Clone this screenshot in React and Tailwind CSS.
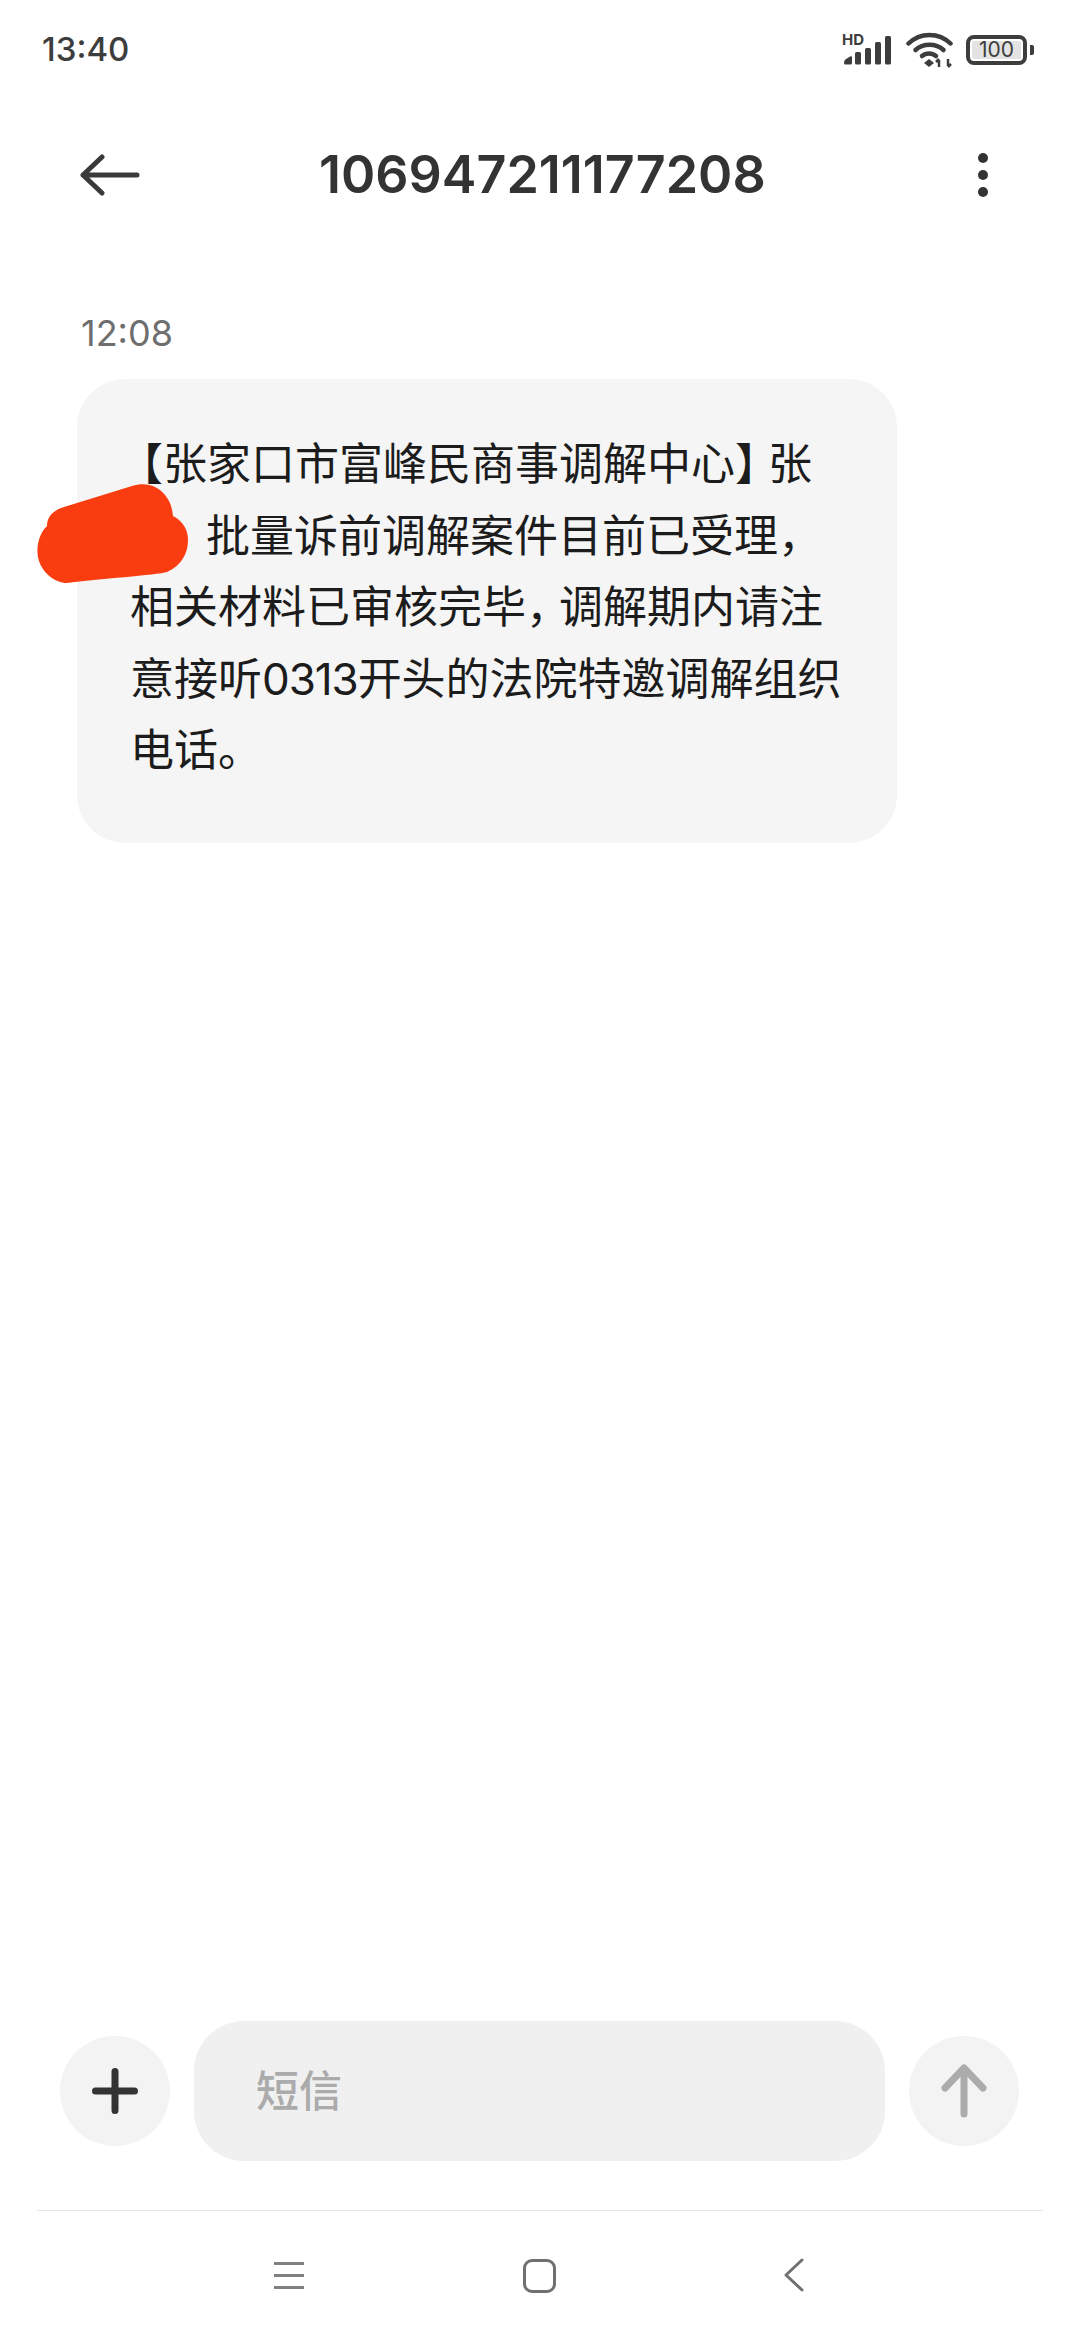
const FONT = "font-['Inter','Noto_Sans_CJK_SC',sans-serif]"
// full-width punctuation is narrower in the screenshot
const NARROW = "[font-feature-settings:'halt'] tracking-[11px]"

// status bar icons
function Signal() {
  return (
    <div className="relative w-[52px] h-[34px]">
      <span className="absolute left-0 top-[-2px] text-[15px] leading-[18px] font-bold text-[#3d3d3d]">HD</span>
      <svg width="52" height="34" viewBox="0 0 52 34">
        <path d="M2 30 q0-3 2-4 l4-2.5 q2-1 2 1 v5.5 q0 1.5-1.5 1.5 h-5 q-1.5 0-1.5-1.5z" fill="#3d3d3d" />
        <rect x="13" y="19" width="6" height="12.5" rx="1.5" fill="#3d3d3d" />
        <rect x="23" y="15" width="6" height="16.5" rx="1.5" fill="#3d3d3d" />
        <rect x="33" y="9" width="6" height="22.5" rx="1.5" fill="#3d3d3d" />
        <rect x="43" y="3" width="6" height="28.5" rx="1.5" fill="#3d3d3d" />
      </svg>
    </div>
  )
}

function Wifi() {
  return (
    <svg width="48" height="36" viewBox="0 0 48 36" fill="none" stroke="#3d3d3d" strokeWidth="4.5" strokeLinecap="round">
      <path d="M2.5 11.5 C14 0 33 0 44.5 11.5" />
      <path d="M9.5 18 C17 11 30 11 37.5 18" />
      <path d="M16 24 C20 20.5 26 20.5 30 24" />
      <path d="M23 27 L28 31 L23 35 L18 31 Z" fill="#3d3d3d" stroke="none" />
      <path d="M33 35 V28 M30 30 L33 27 M42 27 V34 M45 32 L42 35" strokeWidth="2.5" strokeLinecap="butt" />
    </svg>
  )
}

function Battery() {
  return (
    <div className="flex items-center gap-[3px]">
      <div className="w-[61px] h-[30px] rounded-[8px] border-[4px] border-[#3d3d3d] p-[2px] flex">
        <div className="flex-1 bg-[#e3e3e3] rounded-[2px] flex items-center justify-center text-[21px] leading-none text-[#3d3d3d]">100</div>
      </div>
      <div className="w-[4px] h-[10px] rounded-r-[2px] bg-[#3d3d3d]" />
    </div>
  )
}

function NavBar() {
  return (
    <div className="h-[129px] pl-[274px] flex items-center">
      <div className="w-[30px] flex flex-col gap-[9px]">
        <div className="h-[3px] bg-[#808080]" />
        <div className="h-[3px] bg-[#808080]" />
        <div className="h-[3px] bg-[#808080]" />
      </div>
      <div className="ml-[219px] w-[33px] h-[34px] rounded-[9px] border-[3px] border-[#707070]" />
      <svg className="ml-[226px]" width="24" height="36" viewBox="0 0 24 36" fill="none" stroke="#707070" strokeWidth="3" strokeLinecap="round" strokeLinejoin="round">
        <path d="M20 2 L4 17 L20 32" />
      </svg>
    </div>
  )
}

export default function App() {
  return (
    <div className={`w-[1080px] h-[2340px] bg-white flex flex-col relative overflow-hidden ${FONT}`}>
      {/* Status bar */}
      <div className="h-[96px] pl-[42px] pr-[46px] pt-[3px] flex items-center justify-between">
        <span className="text-[33px] font-medium text-[#3d3d3d]">13:40</span>
        <div className="flex items-center gap-[12px]">
          <Signal />
          <Wifi />
          <Battery />
        </div>
      </div>

      {/* Header */}
      <div className="h-[140px] pl-[80px] pt-[17px] flex items-center">
        <svg width="60" height="42" viewBox="0 0 60 42" fill="none" stroke="#3a3a3a" strokeWidth="5" strokeLinecap="round" strokeLinejoin="round">
          <path d="M57 21 H3 M22 3 L3 21 L22 39" />
        </svg>
        <h1 className="ml-[179px] text-[52px] font-semibold text-[#333333] leading-none">106947211177208</h1>
        <div className="ml-[212px] flex flex-col gap-[7px]">
          <div className="w-[10px] h-[10px] rounded-full bg-[#333333]" />
          <div className="w-[10px] h-[10px] rounded-full bg-[#333333]" />
          <div className="w-[10px] h-[10px] rounded-full bg-[#333333]" />
        </div>
      </div>

      {/* Message */}
      <div className="flex-1 pl-[77px] pt-[76px]">
        <div className="pl-[4px] text-[36px] leading-[42px] text-[#6e6e6e]">12:08</div>
        <div className="w-[820px] h-[464px] mt-[25px] rounded-[48px] bg-[#f5f5f5] pl-[53px] pt-[50px] text-[44px] leading-[71.5px] text-[#1c1c1c]">
          <div>
            <span className="-ml-[11px]">【</span>张家口市富峰民商事调解中心<span className={NARROW}>】</span>张
          </div>
          <div className="pl-[76px]">批量诉前调解案件目前已受理，</div>
          <div>相关材料已审核完毕<span className={NARROW}>，</span>调解期内请注</div>
          <div>意接听<span className="tracking-[-1.1px]">0313</span>开头的法院特邀调解组织</div>
          <div>电话。</div>
        </div>
      </div>

      {/* Input */}
      <div className="h-[190px] pl-[60px] pr-[61px] pb-[50px] flex items-center justify-between">
        <div className="w-[110px] h-[110px] rounded-full bg-[#f3f3f3] flex items-center justify-center">
          <svg width="46" height="46" viewBox="0 0 46 46" fill="none" stroke="#333333" strokeWidth="7" strokeLinecap="round">
            <path d="M23 3.5 V42.5 M3.5 23 H42.5" />
          </svg>
        </div>
        <div className="w-[691px] h-[140px] rounded-[50px] bg-[#f0f0f0] flex items-center pl-[62px] text-[43px] font-medium text-[#ababab]">短信</div>
        <div className="w-[110px] h-[110px] rounded-full bg-[#f3f3f3] flex items-center justify-center">
          <svg width="46" height="54" viewBox="0 0 46 54" fill="none" stroke="#ababab" strokeWidth="7" strokeLinecap="round" strokeLinejoin="round">
            <path d="M23 4 V50 M4 24 L23 4 L42 24" />
          </svg>
        </div>
      </div>

      {/* Nav */}
      <div className="mx-[37px] h-[1px] bg-[#e4e4e4] mt-[-1px]" />
      <NavBar />

      {/* red scribble over the hidden name */}
      <svg className="absolute left-[37px] top-[483px]" width="152" height="101" viewBox="0 0 152 101">
        <path d="M27 24 L95 3 C108 -1 120 2 128 12 C133 18 135 24 136 33 C146 38 151 47 151 57 C151 70 145 82 130 89 C120 92 60 96 30 100 C18 100 6 90 2 78 C-2 66 2 50 10 43 C10 33 17 27 27 24 Z" fill="#fa3d10" />
      </svg>
    </div>
  )
}
